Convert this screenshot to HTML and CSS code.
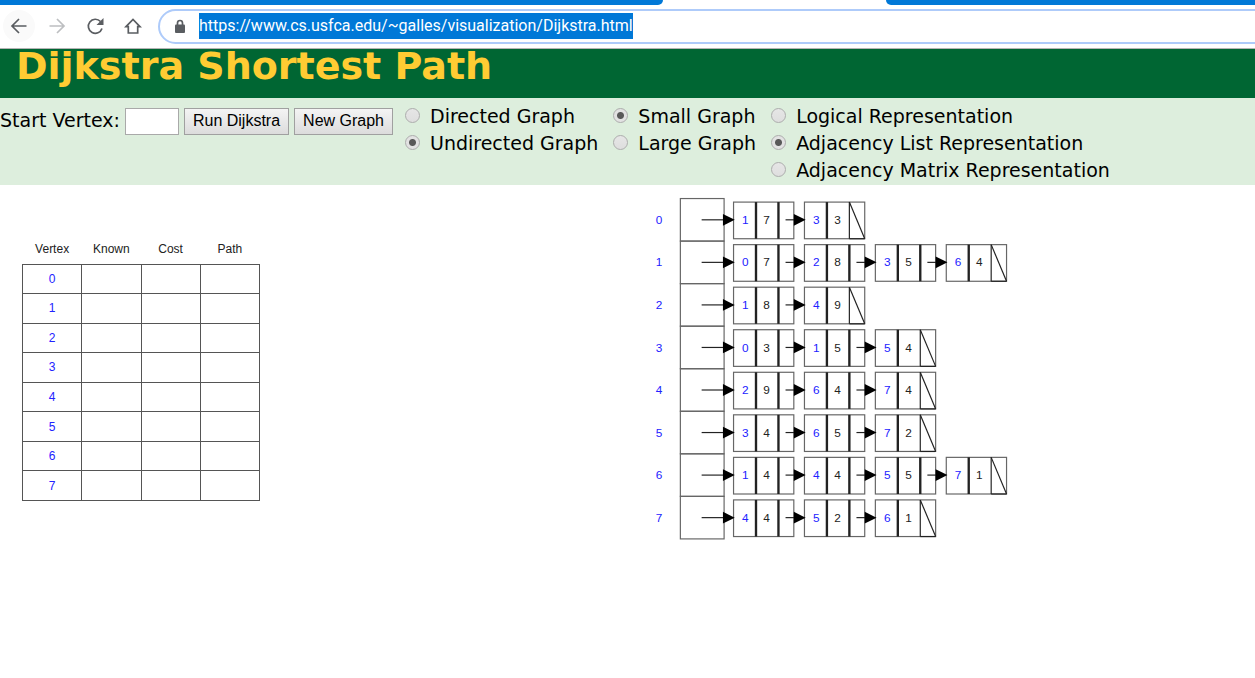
FILE: index.html
```html
<!DOCTYPE html>
<html lang="en">
<head>
<meta charset="utf-8">
<title>Dijkstra Visualization</title>
<link rel="stylesheet" href="styles.css">
</head>
<body>
<div class="tabs"><div class="tab-left"></div><div class="tab-right"></div></div>
<nav class="toolbar" aria-label="Browser">
  <button class="tool tool-hover" aria-label="Back"><svg viewBox="0 0 18 18"><path d="M16.500 9H2.500M9 2L2 9l7 7"/></svg></button>
  <button class="tool tool-off" aria-label="Forward"><svg viewBox="0 0 18 18"><path d="M1.500 9h14M9 2l7 7-7 7"/></svg></button>
  <button class="tool" aria-label="Reload"><svg viewBox="0 0 18 18"><path d="M16 11.500A7 7 0 1 1 14.500 4.500"/><path class="solid" d="M17.500 1v7h-7z"/></svg></button>
  <button class="tool" aria-label="Home"><svg viewBox="0 0 18 18"><path d="M2 9.700L9 2.500l7 7.200h-2.300V16H4.300V9.700z"/></svg></button>
  <div class="address">
    <svg class="lock" viewBox="0 0 12 15"><path class="solid" d="M2 5.500h8q1 0 1 1V13q0 1-1 1H2q-1 0-1-1V6.500q0-1 1-1z"/><path d="M3.500 6V4a2.500 2.500 0 0 1 5 0v2"/></svg>
    <a class="url" href="#">https://www.cs.usfca.edu/~galles/visualization/Dijkstra.html</a>
  </div>
</nav>
<header class="banner"><h1>Dijkstra Shortest Path</h1></header>
<form class="controls">
  <div class="actions">
    <label for="start">Start Vertex:</label>
    <input class="start" id="start" type="text">
    <button type="button">Run Dijkstra</button>
    <button type="button">New Graph</button>
  </div>
  <div class="options">
    <label><input type="radio" name="direction">Directed Graph</label>
    <label><input type="radio" name="direction" checked>Undirected Graph</label>
  </div>
  <div class="options">
    <label><input type="radio" name="size" checked>Small Graph</label>
    <label><input type="radio" name="size">Large Graph</label>
  </div>
  <div class="options">
    <label><input type="radio" name="view">Logical Representation</label>
    <label><input type="radio" name="view" checked>Adjacency List Representation</label>
    <label><input type="radio" name="view">Adjacency Matrix Representation</label>
  </div>
</form>
<main class="stage">
  <table class="results">
    <thead><tr><th>Vertex</th><th>Known</th><th>Cost</th><th>Path</th></tr></thead>
    <tbody>
      <tr><td>0</td><td></td><td></td><td></td></tr>
      <tr><td>1</td><td></td><td></td><td></td></tr>
      <tr><td>2</td><td></td><td></td><td></td></tr>
      <tr><td>3</td><td></td><td></td><td></td></tr>
      <tr><td>4</td><td></td><td></td><td></td></tr>
      <tr><td>5</td><td></td><td></td><td></td></tr>
      <tr><td>6</td><td></td><td></td><td></td></tr>
      <tr><td>7</td><td></td><td></td><td></td></tr>
    </tbody>
  </table>
  <svg class="graph" id="graph" viewBox="-24 -3 308 297" role="img" aria-label="Adjacency list"></svg>
</main>
<script src="graph.js"></script>
</body>
</html>
```
FILE: styles.css
```css
* { box-sizing: border-box; }
body {
  margin: 0;
  background: #fff;
  color: #000;
  font-family: Verdana, "DejaVu Sans", sans-serif;
  overflow-x: hidden;
}
.tabs { display: flex; justify-content: space-between; height: 5px; }
.tab-left { width: 663px; background: #0078d7; border-bottom-right-radius: 6px; }
.tab-right { flex: 1; margin-left: 223px; background: #0078d7; border-bottom-left-radius: 6px; }
.toolbar {
  display: flex;
  align-items: center;
  gap: 6px;
  height: 44px;
  padding: 0 0 1px 3px;
  border-bottom: 1px solid #b4b4b4;
}
.tool {
  display: grid;
  place-items: center;
  width: 32px;
  height: 32px;
  padding: 0;
  border: 0;
  border-radius: 50%;
  background: none;
}
.tool-hover { background: #fafafa; }
.tool svg { width: 18px; height: 18px; }
.toolbar svg { fill: none; stroke: #5a5d61; stroke-width: 1.7; }
.tool-off svg { stroke: #bdbfc1; }
.toolbar .solid { fill: #5a5d61; stroke: none; }
.address {
  display: flex;
  flex: 1;
  align-items: center;
  gap: 13px;
  height: 35px;
  margin: 0 -20px 0 3px;
  padding-left: 14px;
  border: 2px solid #aecbfa;
  border-radius: 18px;
}
.lock { width: 12px; height: 15px; }
.url {
  height: 26px;
  background: #0078d7;
  color: #fff;
  font: 16px/26px Roboto, "Open Sans", sans-serif;
  text-decoration: none;
  white-space: nowrap;
}
.banner { height: 49px; padding-left: 16px; background: #006633; }
h1 { margin: 0; color: #ffcc33; font-size: 38px; line-height: 34px; white-space: nowrap; }
.controls {
  display: flex;
  align-items: flex-start;
  min-height: 87px;
  padding: 5px 0 1px;
  background: #ddeedd;
  font-size: 19px;
  white-space: nowrap;
}
.actions { display: flex; align-items: center; gap: 5px; height: 36px; margin-right: 12px; }
.actions label { line-height: 34px; height: 36px; }
.start { width: 54px; height: 27px; border: 1px solid #a9a9a9; background: #fff; }
.actions button {
  height: 27px;
  padding: 0 8px;
  border: 1px solid #a0a0a0;
  background: linear-gradient(#f4f4f4, #dcdcdc);
  color: #000;
  font: 16px "Liberation Sans", Arial, sans-serif;
}
.options { display: grid; grid-auto-rows: 27px; margin-right: 15px; }
.options label { display: flex; gap: 10px; line-height: 26px; }
.options input {
  appearance: none;
  width: 15px;
  height: 15px;
  margin: 5px 0 0;
  border: 1px solid #adadad;
  border-radius: 50%;
  background: linear-gradient(#e6e6e6, #dedede);
}
.options input:checked { background: radial-gradient(circle, #595959 3px, #e2e2e2 4px); }
.stage {
  display: flex;
  align-items: flex-start;
  justify-content: space-between;
  gap: 20px;
  padding: 10px 239px 20px 22px;
}
.results {
  flex: none;
  width: 238px;
  height: 266px;
  margin-top: 40px;
  border-collapse: collapse;
  table-layout: fixed;
  font: 12px "Liberation Sans", Arial, sans-serif;
  text-align: center;
}
.results th { height: 29px; padding: 0; color: #222; font-weight: normal; }
.results td { padding: 0; border: 1px solid #555; color: #22f; }
.graph { flex: none; width: 364px; font: 10px "Liberation Sans", Arial, sans-serif; }
.graph rect { fill: none; stroke: #666; }
.graph line { stroke: #222; }
.graph .divider { stroke-width: 2; }
.graph text { text-anchor: middle; fill: #222; }
.graph .vertex { fill: #22f; }
```
FILE: graph.js
```js
// Each entry lists the [vertex, cost] pairs adjacent to that vertex.
const adjacency = [
  [[1, 7], [3, 3]],
  [[0, 7], [2, 8], [3, 5], [6, 4]],
  [[1, 8], [4, 9]],
  [[0, 3], [1, 5], [5, 4]],
  [[2, 9], [6, 4], [7, 4]],
  [[3, 4], [6, 5], [7, 2]],
  [[1, 4], [4, 4], [5, 5], [7, 1]],
  [[4, 4], [5, 2], [6, 1]]
];
const line = (x1, y1, x2, y2, cls = "") =>
  `<line class="${cls}" x1="${x1}" y1="${y1}" x2="${x2}" y2="${y2}"/>`;
const text = (x, y, value, cls = "") =>
  `<text class="${cls}" x="${x}" y="${y + 3.5}">${value}</text>`;
const arrow = (from, to, y) =>
  line(from, y, to - 8, y) +
  `<path d="M${to} ${y}l-10 -5v10z"/>`;

let out = "";
adjacency.forEach((edges, row) => {
  const top = row * 36;
  const mid = top + 18;
  out += text(-18, mid, row, "vertex");
  out += `<rect x="0" y="${top}" width="37" height="36"/>`;
  edges.forEach(([vertex, cost], i) => {
    const x = 45 + i * 60;
    const last = i === edges.length - 1;
    out += `<rect x="${x}" y="${top + 3}" width="51" height="31"/>`;
    out += line(x + 19, top + 3, x + 19, top + 34, "divider");
    out += line(x + 38, top + 3, x + 38, top + 34, last ? "" : "divider");
    if (last) {
      out += line(x + 38, top + 3, x + 51, top + 34);
      out += line(x + 38, top + 34, x + 51, top + 34);
    }
    out += text(x + 10, mid, vertex, "vertex");
    out += text(x + 28, mid, cost);
    out += i === 0 ? arrow(18, 46, mid) : arrow(x - 16, x + 1, mid);
  });
});
document.getElementById("graph").innerHTML = out;
```
